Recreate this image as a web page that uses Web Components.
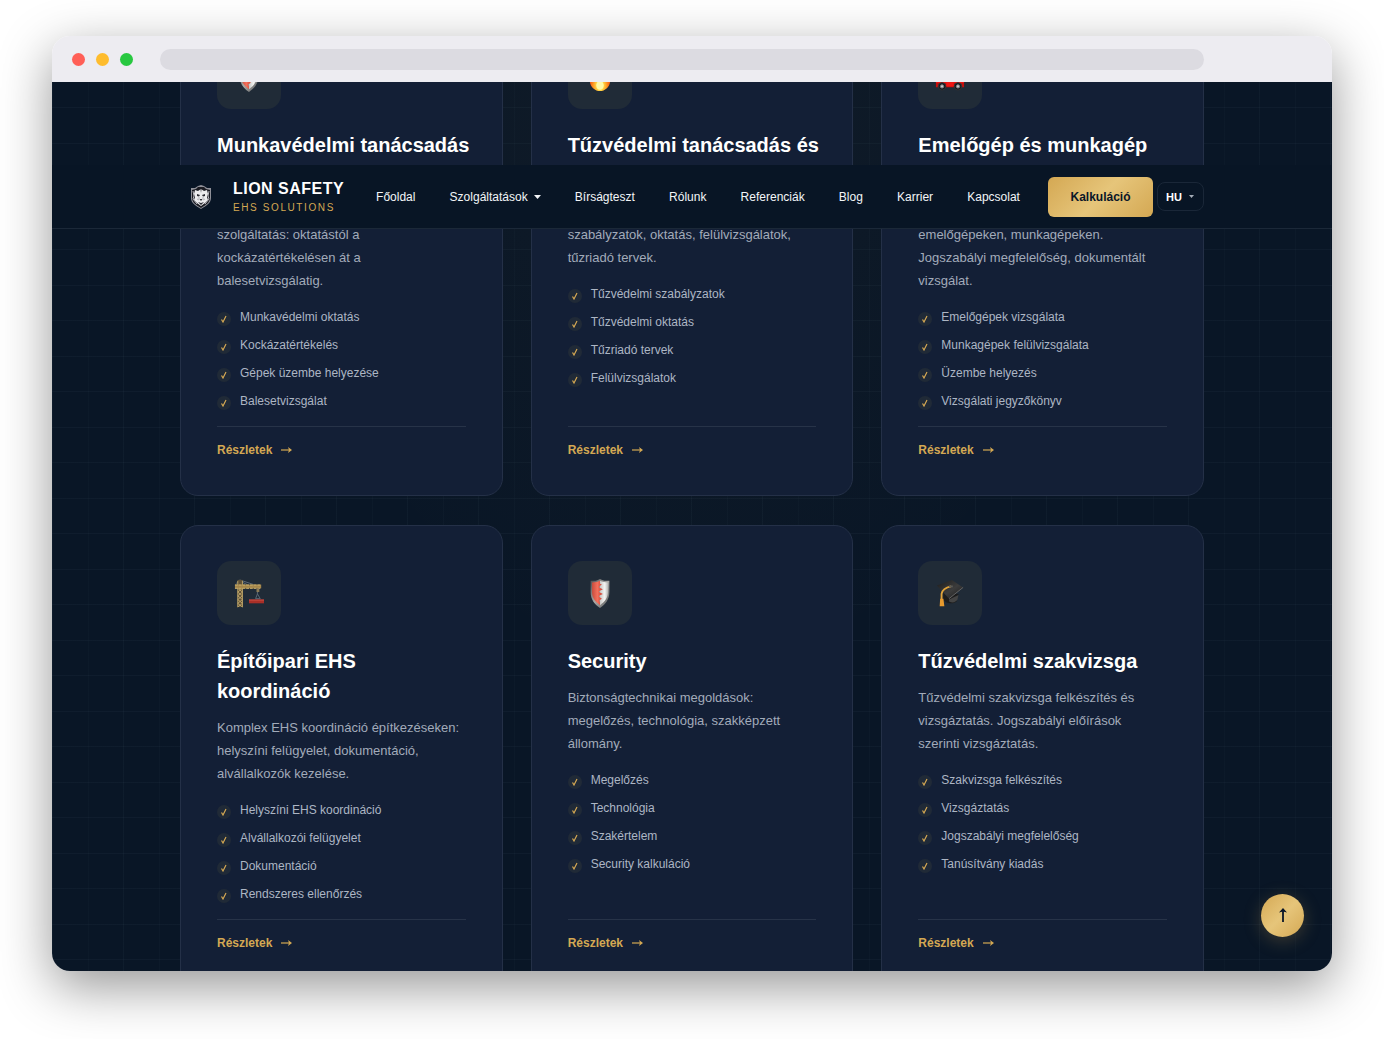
<!DOCTYPE html>
<html lang="hu">
<head>
<meta charset="utf-8">
<meta name="viewport" content="width=device-width, initial-scale=1">
<title>Lion Safety - EHS Solutions</title>
<style>
  :root {
    --navy: #091626;
    --card: #131f36;
    --gold: #d4a853;
    --gold-light: #e6c57a;
    --muted: #a2abba;
  }
  body {
    box-sizing: border-box;
    height: 100vh;
    margin: 0;
    padding: 36px 52px 68px;
    background: white;
    color: white;
    font-family: "Liberation Sans", Arial, sans-serif;
  }
</style>
</head>
<body>
<browser-window>
  <site-header slot="header">
    <nav-link href="#fooldal">Főoldal</nav-link>
    <nav-link href="#szolgaltatasok" menu>Szolgáltatások</nav-link>
    <nav-link href="#birsagteszt">Bírságteszt</nav-link>
    <nav-link href="#rolunk">Rólunk</nav-link>
    <nav-link href="#referenciak">Referenciák</nav-link>
    <nav-link href="#blog">Blog</nav-link>
    <nav-link href="#karrier">Karrier</nav-link>
    <nav-link href="#kapcsolat">Kapcsolat</nav-link>
  </site-header>

  <service-grid>
    <service-card icon="shield">
      <span slot="title">Munkavédelmi tanácsadás<br><br></span>
      <span slot="text"><br>szolgáltatás: oktatástól a<br>kockázatértékelésen át a balesetvizsgálatig.</span>
      <check-item>Munkavédelmi oktatás</check-item>
      <check-item>Kockázatértékelés</check-item>
      <check-item>Gépek üzembe helyezése</check-item>
      <check-item>Balesetvizsgálat</check-item>
    </service-card>
    <service-card icon="fire">
      <span slot="title">Tűzvédelmi tanácsadás és<br><br></span>
      <span slot="text"><br>szabályzatok, oktatás, felülvizsgálatok, tűzriadó tervek.</span>
      <check-item>Tűzvédelmi szabályzatok</check-item>
      <check-item>Tűzvédelmi oktatás</check-item>
      <check-item>Tűzriadó tervek</check-item>
      <check-item>Felülvizsgálatok</check-item>
    </service-card>
    <service-card icon="car">
      <span slot="title">Emelőgép és munkagép<br><br></span>
      <span slot="text"><br>emelőgépeken, munkagépeken. Jogszabályi megfelelőség, dokumentált vizsgálat.</span>
      <check-item>Emelőgépek vizsgálata</check-item>
      <check-item>Munkagépek felülvizsgálata</check-item>
      <check-item>Üzembe helyezés</check-item>
      <check-item>Vizsgálati jegyzőkönyv</check-item>
    </service-card>
    <service-card icon="crane">
      <span slot="title">Építőipari EHS<br>koordináció</span>
      <span slot="text">Komplex EHS koordináció építkezéseken: helyszíni felügyelet, dokumentáció, alvállalkozók kezelése.</span>
      <check-item>Helyszíni EHS koordináció</check-item>
      <check-item>Alvállalkozói felügyelet</check-item>
      <check-item>Dokumentáció</check-item>
      <check-item>Rendszeres ellenőrzés</check-item>
    </service-card>
    <service-card icon="shield">
      <span slot="title">Security</span>
      <span slot="text">Biztonságtechnikai megoldások: megelőzés, technológia, szakképzett állomány.</span>
      <check-item>Megelőzés</check-item>
      <check-item>Technológia</check-item>
      <check-item>Szakértelem</check-item>
      <check-item>Security kalkuláció</check-item>
    </service-card>
    <service-card icon="cap">
      <span slot="title">Tűzvédelmi szakvizsga</span>
      <span slot="text">Tűzvédelmi szakvizsga felkészítés és vizsgáztatás. Jogszabályi előírások<br>szerinti vizsgáztatás.</span>
      <check-item>Szakvizsga felkészítés</check-item>
      <check-item>Vizsgáztatás</check-item>
      <check-item>Jogszabályi megfelelőség</check-item>
      <check-item>Tanúsítvány kiadás</check-item>
    </service-card>
  </service-grid>

  <scroll-top slot="floating"></scroll-top>
</browser-window>

<script>
const ICONS = {
  shield: `
    <svg viewBox="0 0 32 32" aria-hidden="true">
      <defs>
        <linearGradient id="rim" x1="0" x2="1" y2="1"><stop stop-color="#4a4c4f"/><stop offset=".5" stop-color="#aaa9a5"/><stop offset="1" stop-color="#55585b"/></linearGradient>
        <linearGradient id="steel" x1="0" x2="1"><stop stop-color="#c7c7c5"/><stop offset=".6" stop-color="#f5f5f3"/><stop offset="1" stop-color="#b8b9b8"/></linearGradient>
        <linearGradient id="red" x1="0" x2="1"><stop stop-color="#c84b3c"/><stop offset=".5" stop-color="#f3705c"/><stop offset="1" stop-color="#c93a2b"/></linearGradient>
      </defs>
      <path fill="url(#rim)" d="M16 1c3 2 6 2 10 2v12c0 8-4 13-10 17C10 28 6 23 6 15V3C10 3 13 3 16 1z"/>
      <path fill="url(#steel)" d="M16 3c2.500 1.500 5 1.800 8.500 1.800V15c0 6-3.500 10.500-8.500 14z"/>
      <path fill="url(#red)" d="M16 3c-2.500 1.500-5 1.800-8.500 1.800V15c0 6 3.500 10.500 8.500 14v-3l-1-2 3-2-3-2 0-1 4-2-4-2v-1l4-2-4-2v-1l3-2-2-1z"/>
    </svg>`,
  fire: `
    <svg viewBox="0 0 32 32" aria-hidden="true">
      <defs>
        <radialGradient id="flame" cx=".5" cy=".8" r=".6"><stop stop-color="#fffbc0"/><stop offset=".25" stop-color="#ffe04a"/><stop offset=".6" stop-color="#ff8a1c"/><stop offset="1" stop-color="#e22e12"/></radialGradient>
      </defs>
      <path fill="url(#flame)" d="M15 1c2 6 7 8 8 12l1-3c2 3 3 6 3 9 0 7-5 12-11 12S5 26 5 19c0-4 2-7 4-9l1 4c3-3 5-7 5-13z"/>
      <path fill="#fff9a8" d="M16 17c1 3 4 5 4 8 0 3-2 4.500-4 4.500S12 28 12 25c0-3 3-5 4-8z"/>
    </svg>`,
  car: `
    <svg viewBox="0 0 32 32" aria-hidden="true">
      <path fill="#c40e0b" d="M1 19l3-2 4-7c1-1 2-1 3-1h9c2 0 3 1 4 2l4 6 3 2v8H1z"/>
      <path fill="#9fc4d8" d="M10 11h5v6H7zM17 11h4l4 6h-8z"/>
      <path fill="#ef1714" d="M1 19h30v3H1zM12 22h8v4h-8z"/>
      <g fill="#15171b" stroke="#33363a"><circle cx="7.500" cy="26" r="4"/><circle cx="24.500" cy="26" r="4"/></g>
      <g fill="#c7c8ca" stroke="#75777b"><circle cx="7.500" cy="26" r="1.800"/><circle cx="24.500" cy="26" r="1.800"/></g>
    </svg>`,
  crane: `
    <svg viewBox="0 0 32 32" aria-hidden="true">
      <path fill="none" stroke="#5d6a78" d="M2 6l4-3 8 4M6 2l15 5M25 12v5l-2 5h5l-3-5"/>
      <path fill="#5f5137" d="M4 2h5v29H4z"/>
      <path fill="none" stroke="#bda468" d="M4 3v28M9 3v28M4 11l5 4-5 4 5 4-5 4 5 4M9 11l-5 4 5 4-5 4 5 4-5 4"/>
      <path fill="#a4864b" d="M1 7h28v4H1z"/>
      <path fill="none" stroke="#d2b670" stroke-dasharray="3 1" d="M1 7.500h28M1 11h28"/>
      <path fill="#8b7a55" d="M24 11h3v4h-3z"/>
      <path fill="#a92f27" d="M16 23h16v4H16z"/>
      <path fill="#cf5347" d="M16 23h16v1H16z"/>
    </svg>`,
  cap: `
    <svg viewBox="0 0 32 32" aria-hidden="true">
      <defs>
        <linearGradient id="board" x1="0" x2="1" y2="1"><stop stop-color="#1b1b1b"/><stop offset=".55" stop-color="#3c3c3c"/><stop offset="1" stop-color="#1a1a1a"/></linearGradient>
      </defs>
      <path fill="#1c1c1c" d="M9 15v8c3 5 10 5 14 2l2-8z"/>
      <path fill="#444" d="M15 25c4 2 7 1 9-2l1-5-10 5z"/>
      <path fill="url(#board)" d="M2 8l16-6 12 8-15 12z"/>
      <path fill="none" stroke="#666" d="M30 10L15 22"/>
      <path fill="none" stroke="#e0a33a" stroke-width="2" d="M17 9c-5 1-9 3-10 8v6"/>
      <path fill="#e79a2e" d="M5.500 22h3.500l1 8H5z"/>
      <path fill="#5b5a56" d="M15 8h4v2h-4z"/>
    </svg>`,
};

class BrowserWindow extends HTMLElement {
  constructor() {
    super().attachShadow({ mode: "open" }).innerHTML = `
    <style>
      :host {
        display: flex;
        flex-direction: column;
        height: 100%;
        overflow: hidden;
        border-radius: 18px;
        box-shadow: 0 16px 52px rgba(0, 0, 0, 0.41);
      }
      .bar {
        display: flex;
        flex: none;
        align-items: center;
        gap: 11px;
        height: 46px;
        padding: 0 10% 0 20px;
        background: #edecf1;
      }
      .dot {
        width: 13px;
        height: 13px;
        border-radius: 50%;
        background: #ff5f57;
      }
      .dot:nth-child(2) {
        background: #febc2e;
      }
      .dot:nth-child(3) {
        background: #28c840;
      }
      .address {
        flex: 1;
        height: 21px;
        margin-left: 16px;
        border-radius: 11px;
        background: #dcdbe1;
      }
      .viewport {
        position: relative;
        flex: 1;
        min-height: 0;
        overflow: hidden;
        background: var(--navy);
      }
      ::slotted([slot="header"]) {
        position: absolute;
        z-index: 2;
        top: 83px;
        left: 0;
        right: 0;
      }
      ::slotted([slot="floating"]) {
        position: absolute;
        z-index: 3;
        right: 28px;
        bottom: 34px;
      }
    </style>
    <div class="bar">
      <span class="dot"></span>
      <span class="dot"></span>
      <span class="dot"></span>
      <div class="address"></div>
    </div>
    <div class="viewport">
      <slot name="header"></slot>
      <slot></slot>
      <slot name="floating"></slot>
    </div>
    `;
  }
}
customElements.define("browser-window", BrowserWindow);

class NavLink extends HTMLElement {
  constructor() {
    super().attachShadow({ mode: "open" }).innerHTML = `
    <style>
      :host {
        display: block;
      }
      a {
        display: flex;
        align-items: center;
        gap: 6px;
        color: #f3f5f8;
        font-size: 12px;
        line-height: 20px;
        text-decoration: none;
        white-space: nowrap;
      }
      svg {
        display: none;
        width: 7px;
        height: 4px;
        fill: currentColor;
      }
      :host([menu]) svg {
        display: block;
      }
    </style>
    <a><slot></slot><svg viewBox="0 0 7 4" aria-hidden="true"><path d="M0 0h7L3.500 4z"/></svg></a>
    `;
  }
  connectedCallback() {
    this.shadowRoot.querySelector("a").href = this.getAttribute("href");
  }
}
customElements.define("nav-link", NavLink);

class SiteHeader extends HTMLElement {
  constructor() {
    super().attachShadow({ mode: "open" }).innerHTML = `
    <style>
      :host {
        display: block;
        box-sizing: border-box;
        height: 64px;
        padding: 0 10%;
        border-bottom: 1px solid #1b2838;
        background: #081525;
      }
      .inner {
        display: flex;
        align-items: center;
        height: 100%;
      }
      .logo {
        display: flex;
        align-items: center;
        gap: 21px;
        padding-left: 10px;
        color: white;
        text-decoration: none;
        white-space: nowrap;
      }
      .logo svg {
        width: 22px;
        height: 26px;
      }
      .brand {
        padding-top: 2px;
      }
      .name {
        display: block;
        font-size: 16px;
        font-weight: bold;
        letter-spacing: 0.03em;
        line-height: 20px;
      }
      .sub {
        display: block;
        color: var(--gold);
        font-size: 10px;
        letter-spacing: 0.16em;
        line-height: 18px;
      }
      nav {
        display: flex;
        flex: 1;
        justify-content: space-between;
        padding: 0 28px 0 32px;
      }
      .cta {
        min-width: 105px;
        height: 40px;
        padding: 0 20px;
        border: 0;
        border-radius: 6px;
        background: linear-gradient(135deg, var(--gold), var(--gold-light) 50%, var(--gold));
        color: #0a1628;
        font: bold 12px "Liberation Sans", Arial, sans-serif;
      }
      .lang {
        position: relative;
        display: flex;
        align-items: center;
        margin-left: 4px;
      }
      select {
        width: 47px;
        height: 29px;
        padding: 0 8px;
        border: 1px solid #1a2738;
        border-radius: 8px;
        appearance: none;
        background: transparent;
        color: white;
        font: bold 11px "Liberation Sans", Arial, sans-serif;
      }
      .lang svg {
        position: absolute;
        right: 10px;
        width: 5px;
        height: 3px;
        fill: #a5adb8;
        pointer-events: none;
      }
    </style>
    <div class="inner">
      <a class="logo" href="#fooldal">
        <svg viewBox="0 0 22 26" aria-hidden="true">
          <path fill="#8f9098" d="M1 4l4 0 3-2 3-1 3 1 3 2 4 0v10c0 5-5 8-10 11C6 22 1 19 1 14z"/>
          <path fill="#1a1b22" d="M2 6l4-1 2-2h6l2 2 4 1v8c0 4-4 7-9 10-5-3-9-6-9-10z"/>
          <path fill="#ececee" d="M5 6l3 1 3-2 3 2 3-1 1 4-1 3 1 3-3 3-4 3-4-3-3-3 1-3-1-3z"/>
          <path fill="none" stroke="#b8b8bf" d="M3 7l1 5-1 3 4 5M19 7l-1 5 1 3-4 5"/>
          <path fill="#2a2b32" d="M7 10l3 1-1 1.500-2-.5zM15 10l-3 1 1 1.500 2-.5zM9.500 15h3L11 17zM10.500 5h1L11 9zM8 18l3 1 3-1-3 3z"/>
          <path fill="none" stroke="#8b8d96" stroke-width=".6" d="M9 13v2M13 13v2M7 15l2 1M15 15l-2 1"/>
        </svg>
        <span class="brand">
          <span class="name">LION SAFETY</span>
          <span class="sub">EHS SOLUTIONS</span>
        </span>
      </a>
      <nav><slot></slot></nav>
      <button class="cta" type="button">Kalkuláció</button>
      <div class="lang">
        <select aria-label="Nyelv">
          <option>HU</option>
        </select>
        <svg viewBox="0 0 5 3" aria-hidden="true"><path d="M0 0h5L2.500 3z"/></svg>
      </div>
    </div>
    `;
  }
}
customElements.define("site-header", SiteHeader);

class ServiceGrid extends HTMLElement {
  constructor() {
    super().attachShadow({ mode: "open" }).innerHTML = `
    <style>
      :host {
        display: block;
        /* the page is scrolled part way through the first row */
        margin-top: -73px;
        padding: 0 10%;
        /* two lines per tile, 71px apart */
        background:
          repeating-linear-gradient(90deg, var(--rule) 0 1px, transparent 1px 36px, var(--rule-soft) 36px 37px, transparent 37px 71px),
          repeating-linear-gradient(var(--rule) 0 1px, transparent 1px 36px, var(--rule) 36px 37px, transparent 37px 71px) 0 27px,
          radial-gradient(ellipse at 50% 0, rgba(212, 168, 83, 0.04), transparent 50%),
          var(--navy);
        --rule: rgba(150, 190, 200, 0.04);
        --rule-soft: rgba(150, 190, 200, 0.025);
      }
      .grid {
        display: grid;
        grid-template-columns: repeat(3, minmax(0, 1fr));
        gap: 29px 28px;
      }
    </style>
    <div class="grid"><slot></slot></div>
    `;
  }
}
customElements.define("service-grid", ServiceGrid);

class ServiceCard extends HTMLElement {
  constructor() {
    super().attachShadow({ mode: "open" }).innerHTML = `
    <style>
      :host {
        display: flex;
        flex-direction: column;
        box-sizing: border-box;
        padding: 35px 36px;
        border: 1px solid #243047;
        border-radius: 18px;
        background: var(--card);
      }
      .icon {
        display: grid;
        place-items: center;
        width: 64px;
        height: 64px;
        border-radius: 14px;
        background: #202b37;
      }
      .icon svg {
        width: 30px;
        height: 30px;
      }
      h3 {
        margin: 21px 0 10px;
        font-size: 20px;
        line-height: 30px;
        white-space: nowrap;
      }
      p {
        margin: 0 0 15px;
        color: var(--muted);
        font-size: 13px;
        line-height: 23px;
      }
      .list {
        display: grid;
        gap: 8px;
        margin-bottom: 15px;
      }
      .more {
        display: flex;
        align-items: center;
        gap: 9px;
        margin-top: auto;
        padding-top: 13px;
        border-top: 1px solid #273348;
        color: var(--gold);
        font-size: 12px;
        font-weight: bold;
        line-height: 20px;
        text-decoration: none;
      }
      .more svg {
        width: 11px;
        height: 8px;
      }
    </style>
    <div class="icon"></div>
    <h3><slot name="title"></slot></h3>
    <p><slot name="text"></slot></p>
    <div class="list" role="list"><slot></slot></div>
    <a class="more" href="#reszletek">Részletek
      <svg viewBox="0 0 11 8" aria-hidden="true"><path fill="none" stroke="currentColor" stroke-width="1.200" d="M0 4h9"/><path fill="currentColor" d="M7 1l4 3-4 3 1-3z"/></svg>
    </a>
    `;
  }
  connectedCallback() {
    this.shadowRoot.querySelector(".icon").innerHTML =
      ICONS[this.getAttribute("icon")];
  }
}
customElements.define("service-card", ServiceCard);

class CheckItem extends HTMLElement {
  constructor() {
    super().attachShadow({ mode: "open" }).innerHTML = `
    <style>
      :host {
        display: flex;
        align-items: flex-start;
        gap: 9px;
        color: #adb6c4;
        font-size: 12px;
        line-height: 20px;
      }
      svg {
        flex: none;
        width: 14px;
        height: 14px;
        margin-top: 5px;
        border-radius: 50%;
        background: #202a37;
      }
    </style>
    <svg viewBox="0 0 14 14" aria-hidden="true"><path fill="none" stroke="#d4a853" stroke-width="1.200" d="M4.500 7.500L6 10l3-6"/></svg>
    <span><slot></slot></span>
    `;
  }
  connectedCallback() {
    this.setAttribute("role", "listitem");
  }
}
customElements.define("check-item", CheckItem);

class ScrollTop extends HTMLElement {
  constructor() {
    super().attachShadow({ mode: "open" }).innerHTML = `
    <style>
      :host {
        display: block;
      }
      button {
        display: grid;
        place-items: center;
        width: 43px;
        height: 43px;
        padding: 0;
        border: 0;
        border-radius: 50%;
        background: linear-gradient(135deg, var(--gold), var(--gold-light) 50%, var(--gold));
        box-shadow: 0 4px 18px rgba(212, 168, 83, 0.25);
        color: #0a1628;
      }
      svg {
        width: 8px;
        height: 16px;
      }
    </style>
    <button type="button" aria-label="Vissza a tetejére">
      <svg viewBox="0 0 8 16" aria-hidden="true"><path fill="none" stroke="currentColor" stroke-width="1.800" d="M4 1v13"/><path fill="currentColor" d="M0 4.500l4-4.500 4 4.500-4-1z"/></svg>
    </button>
    `;
  }
}
customElements.define("scroll-top", ScrollTop);
</script>
</body>
</html>
